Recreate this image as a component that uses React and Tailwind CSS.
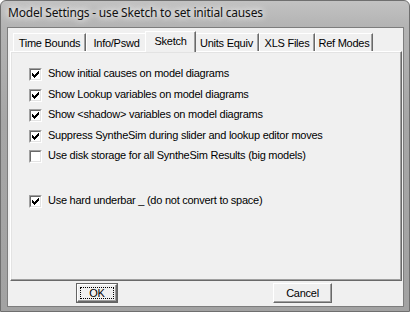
import React from "react";

const F = "font-['Liberation_Sans',Arial,sans-serif] text-[11px] tracking-[-0.25px] text-black";

function Check() {
  return (
    <svg width="7" height="7" viewBox="0 0 7 7" shapeRendering="crispEdges" className="block">
      <path
        fill="#000"
        d="M6 0h1v1h-1z M5 1h2v1h-2z M0 2h1v1h-1z M4 2h3v1h-3z M0 3h2v1h-2z M3 3h3v1h-3z M0 4h5v1h-5z M1 5h3v1h-3z M2 6h1v1h-1z"
      />
    </svg>
  );
}

function Box({ checked }) {
  return (
    <div className="w-[13px] h-[13px] shrink-0 border border-t-[#a0a0a0] border-l-[#a0a0a0] border-r-white border-b-white">
      <div className="w-full h-full border border-t-[#696969] border-l-[#696969] border-r-[#e3e3e3] border-b-[#e3e3e3] bg-white flex items-center justify-center">
        {checked ? <Check /> : null}
      </div>
    </div>
  );
}

function Row({ checked, label }) {
  return (
    <div className="flex items-start h-[13px] gap-[6px]">
      <Box checked={checked} />
      <span className={`${F} leading-[11px] whitespace-nowrap`}>{label}</span>
    </div>
  );
}

function Tab({ label, w, selected }) {
  if (selected) {
    return (
      <div
        className={`relative z-10 -mx-[2px] -mb-[1px] h-[21px] ${w} bg-[#f0f0f0] border-l border-t border-white border-r border-r-[#696969] shadow-[inset_-1px_0_0_#a0a0a0] flex justify-center pt-[3px]`}
      >
        <span className={`${F} leading-[13px]`}>{label}</span>
      </div>
    );
  }
  return (
    <div
      className={`h-[18px] ${w} bg-[#f0f0f0] border-l border-t border-white border-r border-r-[#696969] shadow-[inset_-1px_0_0_#a0a0a0] flex justify-center pt-[3px]`}
    >
      <span className={`${F} leading-[13px]`}>{label}</span>
    </div>
  );
}

export default function App() {
  return (
    <div className="w-[410px] h-[312px] flex flex-col border border-[#6f6f6f] rounded-t-[6px] overflow-hidden bg-[linear-gradient(180deg,#c2c2c2_0px,#b3b3b3_26px,#a6a6a6_120px,#a2a2a2_100%)] pl-[6px] pr-[5px] pb-[4px]">
      <div className="h-[26px] shrink-0 flex items-start pl-[1px] pt-[4px]">
        <span className="font-['Noto_Sans',sans-serif] text-[12px] leading-[16px] tracking-[-0.2px] text-[#111] [text-shadow:0_0_6px_#ffffff,0_0_10px_#ffffff]">
          Model Settings - use Sketch to set initial causes
        </span>
      </div>
      <div className="flex-1 bg-[#f0f0f0] border border-[#7d7d7d] flex flex-col">
        <div className="ml-[2px] w-[392px] pt-[3px] flex flex-col">
          <div className="flex items-end h-[20px] pl-[3px]">
            <Tab label="Time Bounds" w="w-[73px]" />
            <Tab label="Info/Pswd" w="w-[61px]" />
            <Tab label="Sketch" w="w-[51px]" selected />
            <Tab label="Units Equiv" w="w-[65px]" />
            <Tab label="XLS Files" w="w-[56px]" />
            <Tab label="Ref Modes" w="w-[58px]" />
          </div>
          <div className="h-[230px] border border-t-white border-l-white border-r-[#696969] border-b-[#696969] shadow-[inset_-1px_-1px_0_#a0a0a0,inset_1px_1px_0_#e3e3e3] pl-[18px] pt-[16px] flex flex-col">
            <div className="flex flex-col gap-[7.6px]">
              <Row checked label="Show initial causes on model diagrams" />
              <Row checked label="Show Lookup variables on model diagrams" />
              <Row checked label="Show <shadow> variables on model diagrams" />
              <Row checked label="Suppress SyntheSim during slider and lookup editor moves" />
              <Row label="Use disk storage for all SyntheSim Results (big models)" />
            </div>
            <div className="mt-[32px]">
              <Row checked label="Use hard underbar _ (do not convert to space)" />
            </div>
          </div>
        </div>
        <div className="mt-[2px] h-[20px] flex pl-[68px] gap-[155px]">
          <div className="w-[42px] h-[20px] border border-[#646464] p-0">
            <div className="w-full h-full border border-t-white border-l-white border-r-[#696969] border-b-[#696969] shadow-[inset_-1px_-1px_0_#a0a0a0] p-[2px]">
              <div className="w-full h-full border border-dotted border-black flex items-center justify-center">
                <span className={`${F} leading-[11px]`}>OK</span>
              </div>
            </div>
          </div>
          <div className="w-[59px] h-[20px] border border-t-white border-l-white border-r-[#696969] border-b-[#696969] shadow-[inset_-1px_-1px_0_#a0a0a0] flex items-center justify-center">
            <span className={`${F} leading-[11px]`}>Cancel</span>
          </div>
        </div>
      </div>
    </div>
  );
}
